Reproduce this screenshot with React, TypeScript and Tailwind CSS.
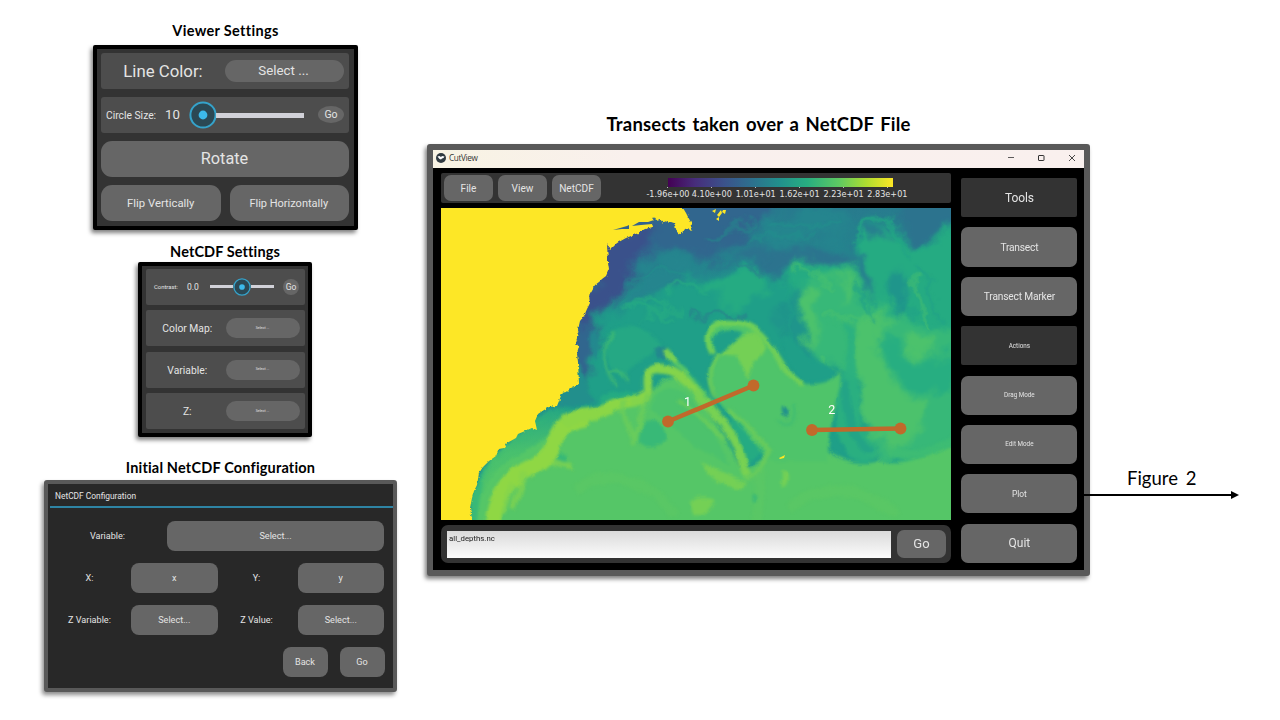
import type { ReactNode } from "react";

const LAND =
  "M420 190H676L683 208L686 213L688 217L692 224L691 231L688 228L685 229L681 235L677 232L674 223L668 221L663 223L660 219L656 220L654 217L652 223L653 227L645 229L636 234L626 238L617 243L610 250L607 244L608 262L609 269L606 276L602 279L599 282L595 285L592 291L589 296L590 303L587 309L584 316L580 321L578 330L577 338L576 343L579 347L577 354L578 362L579 384L574 386L570 388L566 392L562 393L559 401L557 406L549 407L544 410L538 414L535 421L537 430L532 428L525 431L518 434L516 438L507 443L504 448L499 449L496 456L489 461L483 467L479 473L477 485L474 491L472 498L470 508L472 520V540H420Z";

const TICKS = ["-1.96e+00", "4.10e+00", "1.01e+01", "1.62e+01", "2.23e+01", "2.83e+01"];

function Pill({ children, className = "" }: { children: ReactNode; className?: string }) {
  return (
    <button className={`flex shrink-0 items-center justify-center whitespace-nowrap bg-[#666] text-[#e4e4e4] ${className}`}>
      {children}
    </button>
  );
}

function Heading({ children, className = "" }: { children: ReactNode; className?: string }) {
  return (
    <h2 className={`text-center font-['Lato',sans-serif] font-bold whitespace-nowrap text-black ${className}`}>
      {children}
    </h2>
  );
}

function Knob({ size }: { size: number }) {
  return (
    <svg width={size} height={size} viewBox="0 0 28 28" className="relative shrink-0">
      <circle cx="14" cy="14" r="12.6" fill="#2b4854" stroke="#35a3cb" strokeWidth="2" />
      <circle cx="14" cy="14" r="4.4" fill="#3cb9ea" />
    </svg>
  );
}

function ViewerSettings() {
  return (
    <section className="ml-[93px] w-[265px]">
      <Heading className="h-[45px] pt-[22px] text-[14.5px] leading-[18px] tracking-[0.32px]">Viewer Settings</Heading>
      <div className="flex h-[185px] flex-col gap-[8.6px] rounded-[2px] border-4 border-black bg-[#333] p-1 pr-[5px] text-[#e4e4e4] shadow-[-2px_3px_4px_rgba(0,0,0,0.5)]">
        <div className="flex h-[35.5px] items-center rounded-[3px] bg-[#4d4d4d] pr-[5px]">
          <span className="flex-1 pt-[2px] text-center text-[16.8px]">Line Color:</span>
          <Pill className="h-[22px] w-[119px] rounded-full pr-[2px] text-[13.3px]">Select ...</Pill>
        </div>
        <div className="flex h-[35.5px] items-center rounded-[3px] bg-[#4d4d4d] pl-[5px]">
          <span className="w-[59px] pt-[2px] text-[10.3px] whitespace-nowrap">Circle Size:</span>
          <span className="w-[24px] text-[13.2px]">10</span>
          <Knob size={28} />
          <span className="-ml-px h-[5px] w-[88px] translate-y-px bg-[#d1d1d8]" />
          <Pill className="ml-[14px] h-[17px] w-[26px] rounded-[50%] pt-px text-[10.5px]">Go</Pill>
        </div>
        <Pill className="h-[35.5px] rounded-[11px] pr-px text-[16.3px]">Rotate</Pill>
        <div className="flex h-[35.5px] justify-between">
          <Pill className="w-[119.5px] rounded-[11px] pt-[2px] text-[11.3px]">Flip Vertically</Pill>
          <Pill className="w-[119.5px] rounded-[11px] pt-[2px] pr-px text-[11px]">Flip Horizontally</Pill>
        </div>
      </div>
    </section>
  );
}

function NetcdfSettings() {
  return (
    <section className="ml-[138px] w-[174px]">
      <Heading className="h-8 pt-[13px] text-[14.5px] leading-[18px] tracking-[0.1px]">NetCDF Settings</Heading>
      <div className="flex h-[175px] flex-col gap-[5.8px] rounded-[2px] border-4 border-black bg-[#333] pt-[3px] pr-[3px] pl-1 text-[#e4e4e4] shadow-[-2px_3px_4px_rgba(0,0,0,0.5)]">
        <div className="flex h-[35.7px] items-center rounded-[2px] bg-[#4d4d4d] pl-2">
          <span className="w-[33px] pt-px text-[5.9px]">Contrast:</span>
          <span className="w-[23px] pt-px text-[8.5px]">0.0</span>
          <span className="h-[3px] w-[23px] bg-[#d1d1d8]" />
          <Knob size={18} />
          <span className="h-[3px] w-[23px] bg-[#d1d1d8]" />
          <Pill className="ml-[9px] size-4 rounded-full pt-px text-[8.5px]">Go</Pill>
        </div>
        {["Color Map:", "Variable:", "Z:"].map((label) => (
          <div key={label} className="flex h-[35.7px] items-center rounded-[2px] bg-[#4d4d4d] pr-[5.5px]">
            <span className="flex-1 pt-px pl-[3px] text-center text-[10.3px]">{label}</span>
            <Pill className="h-5 w-[74px] rounded-full text-[3.6px]">Select ...</Pill>
          </div>
        ))}
      </div>
    </section>
  );
}

function ConfigRow({ a, av, b, bv }: { a: string; av: string; b: string; bv: string }) {
  return (
    <div className="mb-3 flex h-[30px] items-center">
      <span className="w-[83px] pt-[2px] text-center">{a}</span>
      <Pill className="h-[30px] w-[86.5px] rounded-[8px] pt-[2px]">{av}</Pill>
      <span className="w-[80px] pt-[2px] pr-[2px] text-center">{b}</span>
      <Pill className="h-[30px] w-[86.5px] rounded-[8px] pt-[2px]">{bv}</Pill>
    </div>
  );
}

function InitialConfig() {
  return (
    <section className="ml-[44px] w-[353px]">
      <Heading className="h-[43px] pt-[22px] text-[14.5px] leading-[18px] tracking-[0.18px] [font-variant-ligatures:none]">
        Initial NetCDF Configuration
      </Heading>
      <div className="h-[212px] rounded-[3px] border-4 border-[#595959] bg-[#282828] text-[9.1px] text-[#e4e4e4] shadow-[-2px_3px_4px_rgba(0,0,0,0.45)]">
        <div className="flex h-[22px] items-center pt-[3px] pl-[7px] text-[8.4px]">NetCDF Configuration</div>
        <div className="ml-[2px] h-[2px] bg-[#2e84a4]" />
        <div className="mt-[13px] mb-3 flex h-[30px] items-center">
          <span className="w-[119px] pt-[2px] text-center">Variable:</span>
          <Pill className="h-[30px] w-[217px] rounded-[8px] pt-[2px]">Select...</Pill>
        </div>
        <ConfigRow a="X:" av="x" b="Y:" bv="y" />
        <ConfigRow a="Z Variable:" av="Select..." b="Z Value:" bv="Select..." />
        <div className="flex justify-end gap-3 pr-[8.5px]">
          <Pill className="h-[30px] w-[45px] rounded-[8px] pt-[2px]">Back</Pill>
          <Pill className="h-[30px] w-[45px] rounded-[8px] pt-[2px]">Go</Pill>
        </div>
      </div>
    </section>
  );
}

function OceanMap() {
  return (
    <svg width="510" height="312" viewBox="441 208 510 312" className="block">
      <defs>
        <linearGradient id="sea" x1="0.4" y1="0" x2="0.5" y2="1">
          <stop offset="0" stopColor="#29788e" />
          <stop offset="0.2" stopColor="#24868e" />
          <stop offset="0.36" stopColor="#20998a" />
          <stop offset="0.6" stopColor="#22a485" />
          <stop offset="0.75" stopColor="#48c06e" />
          <stop offset="1" stopColor="#58c765" />
        </linearGradient>
        <filter id="swirl" x="-8%" y="-8%" width="116%" height="116%" colorInterpolationFilters="sRGB">
          <feGaussianBlur stdDeviation="3.8" result="b" />
          <feTurbulence type="fractalNoise" baseFrequency="0.03" numOctaves="4" seed="11" result="n" />
          <feDisplacementMap in="b" in2="n" scale="34" xChannelSelector="R" yChannelSelector="G" />
          <feGaussianBlur stdDeviation="0.7" />
        </filter>
        <filter id="wisp" x="-8%" y="-8%" width="116%" height="116%" colorInterpolationFilters="sRGB">
          <feGaussianBlur stdDeviation="1.8" result="b" />
          <feTurbulence type="fractalNoise" baseFrequency="0.04" numOctaves="4" seed="21" result="n" />
          <feDisplacementMap in="b" in2="n" scale="30" xChannelSelector="R" yChannelSelector="G" />
          <feGaussianBlur stdDeviation="0.6" />
        </filter>
        <filter id="flow" x="-8%" y="-8%" width="116%" height="116%" colorInterpolationFilters="sRGB">
          <feGaussianBlur stdDeviation="1.7" result="b" />
          <feTurbulence type="fractalNoise" baseFrequency="0.05" numOctaves="3" seed="3" result="n" />
          <feDisplacementMap in="b" in2="n" scale="7" xChannelSelector="R" yChannelSelector="G" />
        </filter>
        <filter id="coast" x="-2%" y="-2%" width="104%" height="104%">
          <feTurbulence type="fractalNoise" baseFrequency="0.3" numOctaves="2" seed="5" result="n" />
          <feDisplacementMap in="SourceGraphic" in2="n" scale="3.2" xChannelSelector="R" yChannelSelector="G" />
        </filter>
      </defs>
      <rect x="441" y="208" width="510" height="312" fill="url(#sea)" />
      <g filter="url(#swirl)">
        <g transform="translate(560 205) scale(0.33333)">
          <path fill="#1f9f88" d="M130 370C200 280 330 240 440 210C520 200 560 180 600 215C660 230 690 200 700 165C760 140 820 190 880 195C850 130 890 90 920 35C980 30 1030 80 1040 130C1090 130 1130 75 1240 70V800H0V580Z" />
          <path fill="#31668e" d="M60 -60H650C620 60 570 90 540 130C500 150 460 145 420 175C360 120 280 125 240 170C200 200 190 250 150 290C120 330 105 360 110 440L60 560L20 400Z" />
          <path fill="#3a518b" d="M120 100L300 70L250 140C220 170 200 220 165 280C140 310 120 340 100 390L60 340Z" />
          <path fill="#2c738e" d="M560 130C620 100 690 140 740 120C800 110 850 130 870 190C810 180 770 150 700 160C690 200 640 225 600 205C580 190 560 180 520 180ZM1010 -40H1240V60C1150 70 1100 120 1050 125C1020 90 1020 40 1010 -40Z" />
          <path fill="#25858e" d="M600 20C700 0 800 20 870 60C830 100 700 120 620 110ZM250 170C330 150 400 160 420 210C360 240 280 230 190 310C200 240 230 200 250 170Z" />
          <path fill="#25ab82" d="M880 130C900 60 950 30 990 60C1020 100 1030 140 1080 130C1120 120 1140 80 1240 75V620L1000 500L940 300L880 220ZM420 230C500 200 560 200 620 230C640 270 560 320 480 300ZM690 180C720 130 790 170 880 195C950 250 1000 300 960 360L800 330L700 300C660 280 670 220 690 180Z" />
          <path fill="#26808e" d="M910 50C950 35 990 60 985 85C965 105 930 95 910 75ZM880 160C910 170 940 230 930 280C900 250 880 200 860 180Z" />
          <path fill="#1f958b" d="M1000 200C1060 190 1080 240 1050 290C1040 330 1010 310 985 290ZM660 340C650 280 690 240 720 250C710 310 720 390 760 440L720 500C680 460 660 400 660 340Z" />
          <path fill="#37b878" d="M710 260C740 220 850 180 880 220C900 260 900 300 960 310C1030 300 1050 350 1160 380L1240 400V760L1050 790L940 760L880 560L800 460C760 420 720 330 710 260Z" />
          <path fill="#4cc26c" d="M715 260C750 240 780 270 780 320C790 370 770 390 780 430C750 420 730 380 725 330ZM840 200C880 210 880 260 850 290ZM880 370C930 340 970 310 1010 330C950 370 930 420 945 470C980 530 1040 570 1090 590C1110 650 1060 720 1000 740C910 700 895 580 880 500ZM1030 410C1060 370 1110 380 1140 430C1100 450 1060 450 1030 440Z" />
          <path fill="#27ae81" d="M965 380C940 430 970 490 1020 520C1060 550 1090 560 1100 530C1130 570 1140 600 1190 560V450C1140 480 1080 460 1030 450C1010 420 1000 380 965 380Z" />
        </g>
      </g>
      <g filter="url(#wisp)" fill="none" strokeLinecap="round">
        <g transform="translate(560 205) scale(0.33333)">
          <path d="M230 300C300 240 330 300 300 330M250 340C310 310 350 290 370 330M330 270C360 220 420 230 440 260M180 320C230 290 300 350 340 340" stroke="#26ad81" strokeWidth="12" opacity=".7" />
          <path d="M440 190C500 160 560 200 620 180M150 300C190 270 230 200 290 190M400 350C430 320 500 350 560 320" stroke="#2b768e" strokeWidth="10" opacity=".6" />
          <path d="M640 60C700 30 760 90 830 50M560 110C620 70 680 110 760 90M240 220C290 180 340 210 380 190M450 90C500 60 540 90 600 50" stroke="#1f948c" strokeWidth="12" opacity=".5" />
          <path d="M890 110C890 60 930 25 970 40C1010 60 1010 100 1050 140" stroke="#22a585" strokeWidth="16" opacity=".8" />
          <path d="M1080 180C1130 240 1120 300 1150 360M980 240C1000 300 1040 330 1070 320M900 230C920 280 950 310 940 350M690 260C660 320 690 360 680 420" stroke="#1f9e89" strokeWidth="12" opacity=".55" />
          <path d="M790 470C850 480 850 540 820 600M800 340C850 360 900 340 960 320M1080 210C1060 280 1090 330 1110 370M700 200C730 160 770 190 800 230" stroke="#4cc26c" strokeWidth="11" opacity=".55" />
        </g>
      </g>
      <g filter="url(#flow)">
        <g transform="translate(560 205) scale(0.33333)">
          <path fill="#55c667" d="M-300 1000L-200 800L-80 720L60 640L180 600L262 590C280 520 330 500 380 530C460 610 500 720 550 800L640 740L800 735C830 760 900 790 960 765C1000 780 1060 780 1240 690V1000Z" />
          <path fill="#2bb07f" opacity=".9" d="M850 350C875 420 850 480 838 550C820 620 825 690 860 750C900 785 950 775 945 730C905 690 890 620 900 560C880 500 880 430 885 370Z" />
          <path fill="#1f9a8a" opacity=".55" d="M845 520C835 580 850 640 880 700C900 740 930 760 938 735C890 680 860 600 865 530Z" />
          <path fill="#228f8c" d="M20 550L58 500C90 520 80 560 110 590L60 605L0 600L-50 620L-130 690L-200 750L-240 830L-285 960V800L-190 700L-80 650L-60 610Z" />
          <path fill="#38b977" d="M-30 630L-100 690L-190 750L-235 830L-255 990L-280 990L-265 860L-225 790L-160 730L-90 690Z" />
          <path fill="#25a884" d="M140 390C200 350 280 370 300 420C280 450 220 470 190 520C150 500 130 440 140 390Z" />
          <path fill="#23888e" d="M280 430C320 410 330 440 320 460L290 460ZM100 370C125 400 120 440 105 470L90 400Z" />
          <path fill="#25ab82" d="M110 600C130 560 190 540 235 570C200 600 150 610 110 600Z" />
          <path fill="#4fc46a" d="M445 500C450 450 500 440 520 410C540 385 490 370 465 395L450 440C430 400 440 350 490 347C560 345 600 375 630 420C670 470 690 520 730 535C780 545 830 520 838 500C850 560 820 590 815 650L800 770H640C600 750 540 660 500 620C470 590 440 550 445 500Z" />
          <path fill="#1f9f88" d="M700 400C725 450 780 480 830 492C840 520 780 538 725 525C690 490 665 440 665 390ZM460 400C480 375 520 375 545 385C520 420 490 425 455 460Z" />
          <path fill="#25ab82" d="M510 640C560 680 590 720 612 742C580 760 555 785 545 770C520 730 515 690 510 640Z" />
          <path fill="#21918c" d="M665 612C675 600 690 615 686 632C675 640 665 630 665 612Z" />
          <path fill="#38b977" d="M245 660C280 630 320 660 318 700C300 735 250 735 235 710ZM575 870H590V895H575ZM-8 735L25 755L20 780L-10 770Z" />
          <path fill="#4cc26c" d="M275 620C280 550 320 530 370 560C430 620 470 700 510 780L400 720L330 650Z" />
          <path fill="#74d055" d="M480 450C520 410 560 375 600 385C630 420 610 450 580 470C565 500 570 510 555 520C560 480 540 480 530 455ZM420 770C460 780 500 820 560 830L550 850C480 850 440 810 420 770ZM390 890C420 870 450 880 465 885L430 930H400ZM665 800C690 790 690 840 665 845Z" />
        </g>
      </g>
      <g filter="url(#flow)" fill="none" strokeLinecap="round" strokeLinejoin="round">
        <path d="M491 540C494 500 502 484 522 472C545 462 552 452 555 440C560 425 568 422 582 419" stroke="#8fd744" strokeWidth="16" />
        <path d="M512 486L504 512M524 474L514 508M553 462L571 466" stroke="#84d44b" strokeWidth="6" opacity=".7" />
        <g transform="translate(560 205) scale(0.33333)">
          <path d="M20 645C60 620 110 635 150 610C200 580 230 600 250 575" stroke="#8bd646" strokeWidth="38" />
          <path d="M225 590C265 585 265 570 262 540C258 490 290 480 335 500C380 525 420 560 450 605" stroke="#84d44b" strokeWidth="28" />
          <path d="M410 570C470 620 520 690 540 750L558 805" stroke="#78d152" strokeWidth="26" />
          <path d="M262 570C260 620 230 640 222 715M190 590C185 640 210 670 222 700M360 590L440 650L490 700" stroke="#70cf57" strokeWidth="14" opacity=".7" />
          <path d="M322 440L345 475C390 510 410 530 440 575" stroke="#5ac864" strokeWidth="14" />
          <path d="M320 438L340 462" stroke="#7ad151" strokeWidth="20" />
          <path d="M160 385C120 430 130 500 165 540M150 500C180 495 200 510 208 525" stroke="#4cc26c" strokeWidth="8" opacity=".7" />
          <path d="M455 440C435 390 450 360 490 355C560 350 600 375 630 420C660 465 680 515 725 535" stroke="#70cf57" strokeWidth="17" />
          <path d="M465 585C440 520 445 480 475 450M510 615C550 650 590 690 630 740C600 790 575 830 560 818" stroke="#6ccd59" strokeWidth="13" opacity=".85" />
          <path d="M700 600C720 640 690 670 655 650" stroke="#36b878" strokeWidth="6" opacity=".7" />
          <path d="M390 500C430 560 470 590 500 640" stroke="#1fa187" strokeWidth="9" opacity=".8" />
          <path d="M60 850C150 780 280 840 340 920M700 900C800 830 900 850 1000 920M600 800C590 850 610 900 590 950" stroke="#62cb60" strokeWidth="32" opacity=".3" />
          <path d="M1200 690C1130 740 1060 760 1000 740" stroke="#40bd72" strokeWidth="24" opacity=".7" />
        </g>
      </g>
      <path d={LAND} fill="#fde725" filter="url(#coast)" />
      <g fill="#33628d">
        <path d="M613 230L620 228L627 226L629 225V229L622 229ZM632 226L639 222L648 222L654 220L652 224L641 225Z" />
        <path d="M580 324L581 332L578 333ZM577 339L579 343L576 344Z" />
      </g>
      <path fill="#fde725" d="M712 211L716 209L715 213ZM717 215L721 210L722 213L719 217ZM723 210H726L725 214L722 212ZM716 219L719 217V221ZM779 458L785 455L784 458L780 459Z" />
      <path d="M668 421.5L753.5 385.5M812 430L900.5 428.5" stroke="#c1692b" strokeWidth="4.6" />
      <g fill="#c1692b">
        <circle cx="668" cy="421.5" r="5.9" />
        <circle cx="753.5" cy="385.5" r="5.9" />
        <circle cx="812" cy="430" r="5.9" />
        <circle cx="900.5" cy="428.5" r="5.9" />
      </g>
      <g fill="#fff" fontFamily="Roboto, sans-serif" fontSize="12.5" textAnchor="middle">
        <text x="687.5" y="405.5">1</text>
        <text x="831.7" y="414">2</text>
      </g>
    </svg>
  );
}

function Toolbar() {
  return (
    <div className="flex h-[30px] rounded-[2px] bg-[#333] pt-[2px] pl-[3px]">
      <div className="flex gap-[5px]">
        {["File", "View", "NetCDF"].map((item) => (
          <Pill key={item} className="h-[26px] w-[49px] rounded-[7px] pt-px text-[10.1px]">
            {item}
          </Pill>
        ))}
      </div>
      <div className="ml-[45px] w-[264px] pt-[3px]">
        <div className="ml-[22px] h-[9px] w-[224.5px] bg-[linear-gradient(90deg,#440154,#472d7b_12%,#3b528b_25%,#2c728e_38%,#21918c_50%,#28ae80_62%,#5ec962_76%,#addc30_88%,#fde725)]" />
        <div className="flex w-[264px] font-['DejaVu_Sans',sans-serif] text-[8.1px] leading-[12px] text-[#e4e4e4]">
          {TICKS.map((tick) => (
            <span key={tick} className="flex w-[43.9px] flex-col items-center whitespace-nowrap">
              <i className="h-px w-px bg-[#bbb]" />
              {tick}
            </span>
          ))}
        </div>
      </div>
    </div>
  );
}

function Sidebar() {
  return (
    <aside className="mt-[5px] ml-[10.4px] flex w-[116px] flex-col gap-[10.2px] text-[#e4e4e4]">
      <div className="flex h-[39.2px] items-center justify-center rounded-[2px] bg-[#333] pt-px text-[12px] tracking-[-0.1px]">Tools</div>
      <Pill className="h-[39.2px] rounded-[7px] pt-px text-[10.2px] tracking-[-0.18px]">Transect</Pill>
      <Pill className="h-[39.2px] rounded-[7px] text-[10.2px] tracking-[-0.18px]">Transect Marker</Pill>
      <div className="flex h-[39.2px] items-center justify-center rounded-[2px] bg-[#333] pt-px text-[6.3px]">Actions</div>
      <Pill className="h-[39.2px] rounded-[7px] pt-px text-[6.3px]">Drag Mode</Pill>
      <Pill className="h-[39.2px] rounded-[7px] pt-px text-[6.3px]">Edit Mode</Pill>
      <Pill className="h-[39.2px] rounded-[7px] text-[8.4px]">Plot</Pill>
      <Pill className="h-[39.2px] rounded-[7px] text-[12px]">Quit</Pill>
    </aside>
  );
}

function CutViewWindow() {
  return (
    <div className="h-[432px] w-[663px] shrink-0 rounded-[3px] border-6 border-[#595959] bg-black shadow-[-2px_3px_4px_rgba(0,0,0,0.5)]">
      <header className="flex h-[17.5px] items-center bg-linear-to-r from-[#f8f3e3] via-[#f9f0ed] via-30% to-[#f9f0ee] pl-[3px] text-[#333]">
        <svg width="10" height="10" viewBox="0 0 20 20" className="-mt-px">
          <circle cx="10" cy="10" r="10" fill="#303a40" />
          <path d="M3 7L7 6L10 8L12 6L17 7L15 10L12 11L10 13L7 12Z" fill="#fff" />
        </svg>
        <span className="-mt-px ml-[3px] font-['Open_Sans',sans-serif] text-[8.2px] tracking-[-0.35px]">CutView</span>
        <svg width="70" height="10" viewBox="0 0 70 10" className="-mt-px mr-2 ml-auto" fill="none" stroke="#333">
          <path d="M2 4.5H8" strokeWidth="0.8" />
          <rect x="32.5" y="2.5" width="5.5" height="5" rx="0.5" />
          <path d="M63 2L69 8M69 2L63 8" strokeWidth="0.9" />
        </svg>
      </header>
      <div className="flex pt-[5.5px] pl-2">
        <div className="w-[510px]">
          <Toolbar />
          <div className="my-[5px] h-[312px]">
            <OceanMap />
          </div>
          <div className="flex h-[38px] items-center rounded-[7px] bg-[#333] pl-[6px]">
            <div className="h-[27px] w-[444px] bg-linear-to-b from-[#dadada] to-[#fcfcfc] pt-[2px] pl-[2px] text-[7.8px] leading-[11px] text-[#222]">
              all_depths.nc
            </div>
            <Pill className="ml-[6px] h-[28px] w-[49px] rounded-[7px] text-[13px]">Go</Pill>
          </div>
        </div>
        <Sidebar />
      </div>
    </div>
  );
}

export default function App() {
  return (
    <main className="flex h-[720px] w-[1280px] overflow-hidden bg-white font-['Roboto',sans-serif]">
      <div className="w-[427px] shrink-0">
        <ViewerSettings />
        <NetcdfSettings />
        <InitialConfig />
      </div>
      <div>
        <Heading className="h-[144px] w-[663px] pt-[112px] text-[18.5px] leading-[24px] tracking-[0.2px] [word-spacing:1.8px]">
          Transects taken over a NetCDF File
        </Heading>
        <div className="flex">
          <CutViewWindow />
          <div className="relative -ml-[6px] pt-[322px]">
            <p className="h-[25px] pl-[43px] font-['Lato',sans-serif] text-[18.5px] leading-[25px] text-black [word-spacing:3px]">
              Figure 2
            </p>
            <svg width="156" height="8" viewBox="0 0 156 8" className="block">
              <path d="M0 4H149" stroke="#000" strokeWidth="2" />
              <path d="M147 0L155 4L147 8Z" />
            </svg>
          </div>
        </div>
      </div>
    </main>
  );
}
